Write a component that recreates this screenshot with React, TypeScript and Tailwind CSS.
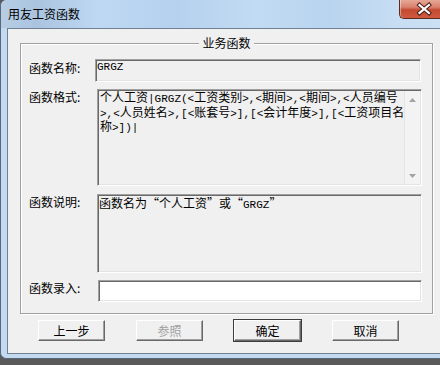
import React from "react";

function Mixed({ text }: { text: string }) {
  const parts = text.split(/([\x20-\x7E]+)/).filter((p) => p.length > 0);
  return (
    <>
      {parts.map((p, i) =>
        /^[\x20-\x7E]+$/.test(p) ? (
          <span key={i} className="font-['Liberation_Mono',monospace] text-[11px]">
            {p}
          </span>
        ) : (
          <span key={i}>{p}</span>
        )
      )}
    </>
  );
}

const sunken =
  "border border-t-[#a0a0a0] border-l-[#a0a0a0] border-r-white border-b-white shadow-[inset_1px_1px_0_#696969,inset_-1px_-1px_0_#e3e3e3]";

const raised =
  "border border-t-white border-l-white border-r-[#696969] border-b-[#696969] shadow-[inset_-1px_-1px_0_#a0a0a0] bg-[#f0f0f0] flex items-center justify-center text-[12px] leading-[14px]";

function Arrow({ up }: { up?: boolean }) {
  return (
    <div className="h-[17px] flex items-center justify-center">
      <svg width="7" height="4" viewBox="0 0 7 4">
        {up ? (
          <polygon points="0,4 7,4 3.5,0" fill="#a3a3a3" />
        ) : (
          <polygon points="0,0 7,0 3.5,4" fill="#a3a3a3" />
        )}
      </svg>
    </div>
  );
}

export default function App() {
  return (
    <div className="w-[440px] h-[365px] overflow-hidden bg-[#5a5a5a] font-['Noto_Sans_CJK_SC',sans-serif] text-black">
      <div className="flex flex-col w-[440px] h-[359px] bg-[#c3daf1] border-l border-b border-[#56687b] rounded-tl-[6px] rounded-bl-[6px]">
        {/* Title bar */}
        <div className="h-[28px] shrink-0 flex items-start rounded-tl-[6px] bg-[linear-gradient(90deg,#b7cde4_0%,#aac4e0_8%,#bed8f3_22%,#b6d1ee_40%,#c2dbf4_58%,#b9d4ef_75%,#c6ddf3_90%,#cbe0f4_100%)]">
          <div className="pl-[7px] pt-[6px] text-[12px] leading-[16px] text-black">
            用友工资函数
          </div>
          <div className="ml-auto w-[41px] h-[19px] border border-t-0 border-r-0 border-[#5e2a20] rounded-bl-[5px] bg-[linear-gradient(to_bottom,#e6a898_0%,#d9806c_40%,#c44a32_55%,#cf5a40_100%)] shadow-[inset_1px_0_0_rgba(255,255,255,0.4)]">
            <svg width="40" height="18" viewBox="0 0 40 18">
              <path d="M19.5 5 L29 13 M29 5 L19.5 13" stroke="#4a1d15" strokeWidth="4.2" strokeLinecap="square" />
              <path d="M19.5 5 L29 13 M29 5 L19.5 13" stroke="#ffffff" strokeWidth="2.2" strokeLinecap="square" />
            </svg>
          </div>
        </div>

        {/* Client area */}
        <div className="flex-1 ml-[6px] mb-[4px] bg-[#f0f0f0] border-l border-t border-b border-[#6f8193] flex flex-col">
          {/* Group box */}
          <div className="ml-[12px] mt-[14px] w-[413px] h-[271px] border border-[#a0a0a0] shadow-[inset_1px_1px_0_#ffffff,1px_1px_0_#ffffff] flex flex-col">
            <div className="self-center -mt-[9px] px-[3px] bg-[#f0f0f0] text-[12px] leading-[16px]">
              业务函数
            </div>

            {/* Row 1 */}
            <div className="flex mt-[8px] pl-[8px]">
              <div className="w-[66px] text-[12px] leading-[16px] pt-[1px]">函数名称:</div>
              <div className={`w-[326px] h-[23px] bg-[#f0f0f0] ${sunken} pl-[1px] pt-[1px] font-['Liberation_Mono',monospace] text-[11px] leading-[13px]`}>
                GRGZ
              </div>
            </div>

            {/* Row 2 */}
            <div className="flex mt-[7px] pl-[8px]">
              <div className="w-[68px] text-[12px] leading-[16px]">函数格式:</div>
              <div className={`w-[325px] h-[97px] bg-[#f0f0f0] ${sunken} flex p-[1px]`}>
                <div className="flex-1 pl-[1px] text-[12px] leading-[12.5px] whitespace-nowrap">
                  <div><Mixed text="个人工资|GRGZ(<工资类别>,<期间>,<期间>,<人员编号" /></div>
                  <div><Mixed text=">,<人员姓名>,[<账套号>],[<会计年度>],[<工资项目名" /></div>
                  <div><Mixed text="称>])|" /></div>
                </div>
                <div className="w-[17px] bg-[#f3f3f3] border-l border-[#e4e4e4] flex flex-col justify-between">
                  <Arrow up />
                  <Arrow />
                </div>
              </div>
            </div>

            {/* Row 3 */}
            <div className="flex mt-[8px] pl-[8px]">
              <div className="w-[68px] text-[12px] leading-[16px]">函数说明:</div>
              <div className={`w-[325px] h-[79px] bg-[#f0f0f0] ${sunken} pl-[1px] pt-[1px] text-[12px] leading-[14px] whitespace-nowrap`}>
                <Mixed text="函数名为“个人工资”或“GRGZ”" />
              </div>
            </div>

            {/* Row 4 */}
            <div className="flex mt-[7px] pl-[8px]">
              <div className="w-[69px] text-[12px] leading-[16px]">函数录入:</div>
              <div className={`w-[324px] h-[22px] bg-white ${sunken}`}></div>
            </div>
          </div>

          {/* Buttons */}
          <div className="flex mt-[6px] pl-[30px] gap-[31px]">
            <div className={`w-[67px] h-[21px] ${raised}`}>上一步</div>
            <div className={`w-[67px] h-[21px] ${raised} text-[#a0a0a0]`}>参照</div>
            <div className={`w-[67px] h-[21px] ${raised} outline outline-1 outline-[#3c3c3c]`}>确定</div>
            <div className={`w-[67px] h-[21px] ${raised}`}>取消</div>
          </div>
        </div>
      </div>
    </div>
  );
}
